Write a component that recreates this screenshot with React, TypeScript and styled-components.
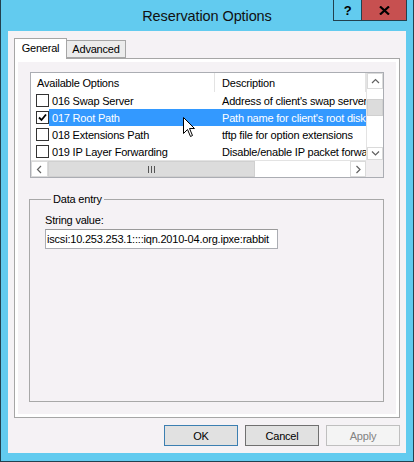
import styled, { createGlobalStyle } from "styled-components";

const GlobalStyle = createGlobalStyle`
  body {
    margin: 0;
    background: #fff;
    font-family: "Liberation Sans", Arial, sans-serif;
    font-size: 11px;
    letter-spacing: -0.2px;
    color: #000;
  }
`;

const Frame = styled.div`
  position: relative;
  width: 414px;
  height: 462px;
  box-sizing: border-box;
  background: #62cbef;
  border: 1px solid #22414f;
  border-top: none;
  display: flex;
  flex-direction: column;
`;

const TitleBar = styled.div`
  height: 31px;
  display: grid;
  grid-template-columns: 1fr auto 1fr;
  align-items: start;
`;

const Title = styled.div`
  grid-column: 2;
  align-self: center;
  font-size: 14.5px;
  letter-spacing: -0.1px;
  color: #111;
`;

const Controls = styled.div`
  grid-column: 3;
  justify-self: end;
  display: flex;
  margin-right: 6px;
`;

const CaptionButton = styled.div<{ $close?: boolean }>`
  width: ${(p) => (p.$close ? 46 : 29)}px;
  height: 21px;
  box-sizing: border-box;
  border: 1px solid #22414f;
  border-top: none;
  margin-left: ${(p) => (p.$close ? -1 : 0)}px;
  background: ${(p) => (p.$close ? "#c75050" : "#62cbef")};
  display: flex;
  align-items: center;
  justify-content: center;
  font-weight: bold;
  font-size: 13px;
`;

const Client = styled.div`
  flex: 1;
  margin: 0 7px 8px 7px;
  padding: 7px 6px 0 6px;
  background: #f5f2f5;
  display: flex;
  flex-direction: column;
`;

const TabStrip = styled.div`
  display: flex;
  align-items: flex-end;
  height: 20px;
  position: relative;
  z-index: 1;
`;

const Tab = styled.div<{ $active?: boolean }>`
  box-sizing: border-box;
  height: ${(p) => (p.$active ? 21 : 18)}px;
  margin-bottom: ${(p) => (p.$active ? -1 : 0)}px;
  margin-left: ${(p) => (p.$active ? 0 : -1)}px;
  width: ${(p) => (p.$active ? 53 : 60)}px;
  border: 1px solid #a6a6a6;
  border-bottom: ${(p) => (p.$active ? "none" : "1px solid #a6a6a6")};
  background: ${(p) => (p.$active ? "#fff" : "#ececec")};
  display: flex;
  align-items: center;
  justify-content: center;
  padding-bottom: ${(p) => (p.$active ? 2 : 0)}px;
`;

const TabPage = styled.div`
  box-sizing: border-box;
  height: 360px;
  border: 1px solid #a6a6a6;
  background: #f5f2f5;
  box-shadow: inset 0 0 0 3px #fff;
  padding: 13px 15px 15px 14px;
  display: flex;
  flex-direction: column;
  gap: 15px;
`;

const ListView = styled.div`
  margin-left: 1px;
  width: 354px;
  height: 106px;
  box-sizing: border-box;
  border: 1px solid #abadb3;
  background: #fff;
  display: grid;
  grid-template-columns: 1fr 17px;
  grid-template-rows: 1fr 17px;
`;

const ListBody = styled.div`
  overflow: hidden;
  display: flex;
  flex-direction: column;
`;

const Header = styled.div`
  height: 19px;
  display: flex;
  flex-shrink: 0;
`;

const HeaderCell = styled.div<{ $width?: number }>`
  ${(p) => (p.$width ? `width: ${p.$width}px;` : "flex: 1;")}
  box-sizing: border-box;
  padding-left: ${(p) => (p.$width ? 6 : 7)}px;
  border-right: 1px solid #e3e3e3;
  display: flex;
  align-items: center;
  white-space: nowrap;
`;

const Rows = styled.div`
  display: flex;
  flex-direction: column;
`;

const Row = styled.div`
  height: 17px;
  display: flex;
  align-items: center;
  flex-shrink: 0;
`;

const CheckBox = styled.div`
  width: 13px;
  height: 13px;
  margin-left: 5px;
  box-sizing: border-box;
  border: 1px solid #333;
  background: #fff;
  display: flex;
  align-items: center;
  justify-content: center;
  flex-shrink: 0;
`;

const Cells = styled.div<{ $selected?: boolean }>`
  flex: 1;
  height: 100%;
  display: flex;
  align-items: center;
  background: ${(p) => (p.$selected ? "#3399ff" : "transparent")};
  color: ${(p) => (p.$selected ? "#fff" : "#000")};
  white-space: nowrap;
  overflow: hidden;
`;

const NameCell = styled.div`
  width: 165px;
  box-sizing: border-box;
  padding-left: 3px;
  flex-shrink: 0;
`;

const DescCell = styled.div`
  padding-left: 8px;
  overflow: hidden;
`;

const VScroll = styled.div`
  border-left: 1px solid #e3e3e3;
  display: flex;
  flex-direction: column;
  background: #fff;
`;

const ArrowButton = styled.div<{ $size: number; $vertical?: boolean }>`
  ${(p) => (p.$vertical ? `height: ${p.$size}px;` : `width: ${p.$size}px;`)}
  box-sizing: border-box;
  border: 1px solid #dadada;
  background: #fff;
  display: flex;
  align-items: center;
  justify-content: center;
  flex-shrink: 0;
`;

const Track = styled.div<{ $vertical?: boolean }>`
  flex: 1;
  display: flex;
  flex-direction: ${(p) => (p.$vertical ? "column" : "row")};
  background: #fff;
`;

const Thumb = styled.div<{ $vertical?: boolean }>`
  box-sizing: border-box;
  background: #dcdcdc;
  border: 1px solid #d0d0d0;
  display: flex;
  align-items: center;
  justify-content: center;
  ${(p) =>
    p.$vertical
      ? "margin-top: 10px; height: 17px;"
      : "width: 207px; height: 100%;"}
`;

const HScroll = styled.div`
  border-top: 1px solid #e3e3e3;
  display: flex;
  background: #fff;
`;

const Corner = styled.div`
  background: #f0eef0;
`;

const Group = styled.fieldset`
  margin: 0;
  width: 355px;
  height: 210px;
  box-sizing: border-box;
  border: 1px solid #a8a8a8;
  padding: 9px 15px 0 15px;
  min-inline-size: 0;
`;

const Legend = styled.legend`
  padding: 0 2px;
  margin-left: 6px;
`;

const FieldLabel = styled.div`
  margin-bottom: 3px;
`;

const TextBox = styled.div`
  width: 233px;
  height: 20px;
  box-sizing: border-box;
  border: 1px solid #abadb3;
  border-top-color: #9a9a9a;
  background: #fff;
  padding-left: 1px;
  display: flex;
  align-items: center;
  white-space: nowrap;
  overflow: hidden;
`;

const ButtonRow = styled.div`
  margin-top: 7px;
  display: flex;
  justify-content: flex-end;
  gap: 7px;
`;

const Button = styled.div<{ $default?: boolean; $disabled?: boolean }>`
  width: 74px;
  height: 21px;
  box-sizing: border-box;
  border: 1px solid
    ${(p) => (p.$default ? "#3c7fb1" : p.$disabled ? "#bfbfbf" : "#707070")};
  background: ${(p) => (p.$disabled ? "#f4f4f4" : "#e1e1e1")};
  color: ${(p) => (p.$disabled ? "#838383" : "#000")};
  display: flex;
  align-items: center;
  justify-content: center;
`;

const Pointer = styled.svg`
  position: absolute;
  left: 182px;
  top: 117px;
`;

const Chevron = ({ dir }: { dir: "up" | "down" | "left" | "right" }) => {
  const pts = {
    up: "1,5 4.5,1.5 8,5",
    down: "1,1.5 4.5,5 8,1.5",
    left: "5,1 1.5,4.5 5,8",
    right: "1.5,1 5,4.5 1.5,8",
  }[dir];
  const vertical = dir === "up" || dir === "down";
  return (
    <svg width={vertical ? 9 : 7} height={vertical ? 7 : 9}>
      <polyline points={pts} fill="none" stroke="#606060" strokeWidth="1.2" />
    </svg>
  );
};

const options = [
  { name: "016 Swap Server", desc: "Address of client's swap server", checked: false },
  { name: "017 Root Path", desc: "Path name for client's root disk", checked: true },
  { name: "018 Extensions Path", desc: "tftp file for option extensions", checked: false },
  { name: "019 IP Layer Forwarding", desc: "Disable/enable IP packet forwarding", checked: false },
];

export default function App() {
  return (
    <>
      <GlobalStyle />
      <Frame>
        <TitleBar>
          <Title>Reservation Options</Title>
          <Controls>
            <CaptionButton>?</CaptionButton>
            <CaptionButton $close>
              <svg width="11" height="9" viewBox="0 0 11 9">
                <path d="M1 0.5 L10 8.5 M10 0.5 L1 8.5" stroke="#000" strokeWidth="2.2" />
              </svg>
            </CaptionButton>
          </Controls>
        </TitleBar>
        <Client>
          <TabStrip>
            <Tab $active>General</Tab>
            <Tab>Advanced</Tab>
          </TabStrip>
          <TabPage>
            <ListView>
              <ListBody>
                <Header>
                  <HeaderCell $width={184}>Available Options</HeaderCell>
                  <HeaderCell>Description</HeaderCell>
                </Header>
                <Rows>
                  {options.map((o) => (
                    <Row key={o.name}>
                      <CheckBox>
                        {o.checked && (
                          <svg width="9" height="9" viewBox="0 0 9 9">
                            <path d="M1 4.5 L3.5 7 L8 1.5" fill="none" stroke="#000" strokeWidth="1.8" />
                          </svg>
                        )}
                      </CheckBox>
                      <Cells $selected={o.checked}>
                        <NameCell>{o.name}</NameCell>
                        <DescCell>{o.desc}</DescCell>
                      </Cells>
                    </Row>
                  ))}
                </Rows>
              </ListBody>
              <VScroll>
                <ArrowButton $vertical $size={16}>
                  <Chevron dir="up" />
                </ArrowButton>
                <Track $vertical>
                  <Thumb $vertical />
                </Track>
                <ArrowButton $vertical $size={13}>
                  <Chevron dir="down" />
                </ArrowButton>
              </VScroll>
              <HScroll>
                <ArrowButton $size={17}>
                  <Chevron dir="left" />
                </ArrowButton>
                <Track>
                  <Thumb>
                    <svg width="7" height="7">
                      <path d="M0.5 0 V7 M3.5 0 V7 M6.5 0 V7" stroke="#555" strokeWidth="1" />
                    </svg>
                  </Thumb>
                </Track>
                <ArrowButton $size={16}>
                  <Chevron dir="right" />
                </ArrowButton>
              </HScroll>
              <Corner />
            </ListView>
            <Group>
              <Legend>Data entry</Legend>
              <FieldLabel>String value:</FieldLabel>
              <TextBox>iscsi:10.253.253.1::::iqn.2010-04.org.ipxe:rabbit</TextBox>
            </Group>
          </TabPage>
          <ButtonRow>
            <Button $default>OK</Button>
            <Button>Cancel</Button>
            <Button $disabled>Apply</Button>
          </ButtonRow>
        </Client>
        <Pointer width="13" height="21" viewBox="0 0 13 21">
          <path
            d="M0.5 0.5 L0.5 16.5 L4.5 12.5 L7.5 19.5 L9.5 18.5 L6.5 11.5 L11.5 11.5 Z"
            fill="#fff"
            stroke="#000"
            strokeWidth="1"
          />
        </Pointer>
      </Frame>
    </>
  );
}
